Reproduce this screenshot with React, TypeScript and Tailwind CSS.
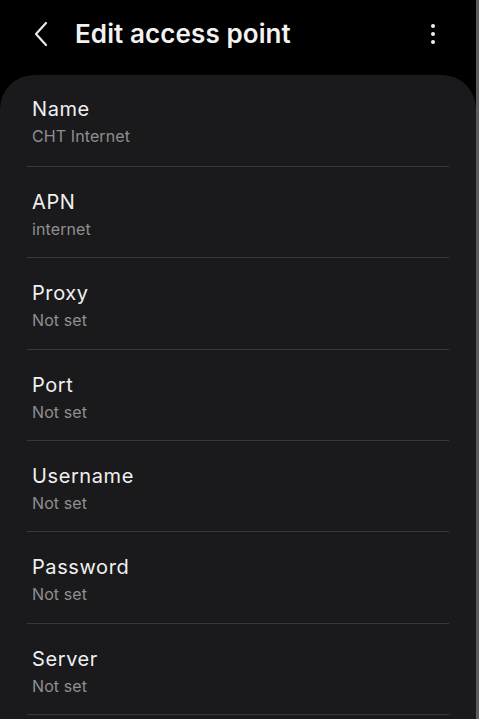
import React from "react";

const rows = [
  { t: "Name", s: "CHT Internet" },
  { t: "APN", s: "internet" },
  { t: "Proxy", s: "Not set" },
  { t: "Port", s: "Not set" },
  { t: "Username", s: "Not set" },
  { t: "Password", s: "Not set" },
  { t: "Server", s: "Not set" },
];

export default function App() {
  return (
    <div
      className="w-[479px] h-[724px] overflow-hidden bg-white flex flex-col"
      style={{ fontFamily: "Inter, 'Noto Sans', sans-serif" }}
    >
      <div className="flex h-[719px]">
        <div className="w-[476px] bg-black flex flex-col">
          <div className="h-[75px] flex items-center shrink-0">
            <svg width="16" height="26" viewBox="0 0 16 26" className="ml-[33px] mt-[-8px]">
              <path d="M13 2 L3 13 L13 24" fill="none" stroke="#e8e8e8" strokeWidth="2.2" strokeLinecap="round" strokeLinejoin="round" />
            </svg>
            <div className="ml-[26px] mt-[-8px] text-[26px] font-semibold text-[#f2f2f2] tracking-[0.1px]">
              Edit access point
            </div>
            <div className="ml-auto mr-[41px] mt-[-8px] flex flex-col gap-[4px]">
              <div className="w-[4px] h-[4px] rounded-full bg-[#eeeeee]" />
              <div className="w-[4px] h-[4px] rounded-full bg-[#eeeeee]" />
              <div className="w-[4px] h-[4px] rounded-full bg-[#eeeeee]" />
            </div>
          </div>
          <div className="flex-1 bg-[#1a1a1c] rounded-t-[34px] overflow-hidden">
            {rows.map((r, i) => (
              <div key={r.t}>
                <div className={`px-[32px] ${i === 0 ? "pt-[21px] pb-[19px]" : "pt-[22px] pb-[17.33px]"}`}>
                  <div className="text-[20px] leading-[26px] text-[#f0f0f0] tracking-[0.6px]">{r.t}</div>
                  <div className="text-[16px] leading-[22px] text-[#8f8f8f] mt-[3px] tracking-[0.1px]">{r.s}</div>
                </div>
                <div className="mx-[27px] h-px bg-[#38383a]" />
              </div>
            ))}
          </div>
        </div>
        <div className="w-[3px] bg-[#5c5c5c]" />
      </div>
    </div>
  );
}
